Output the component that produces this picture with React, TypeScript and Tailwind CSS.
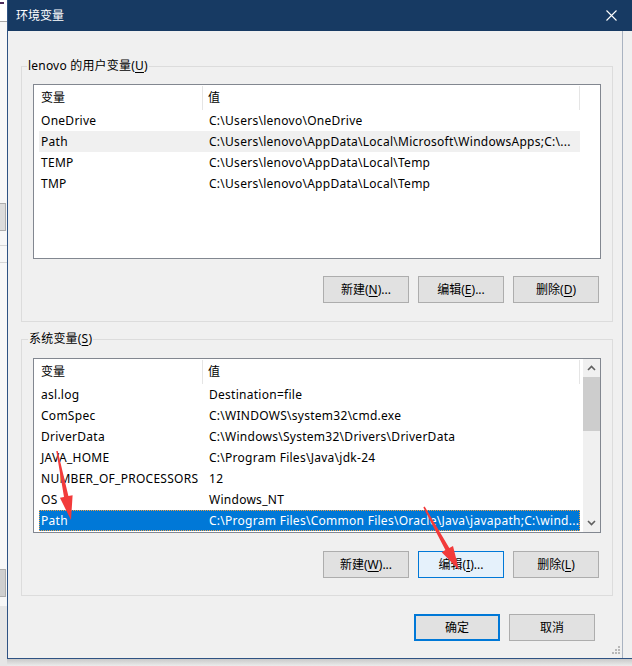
import React from "react";

type Row = [string, string];

const userRows: Row[] = [
  ["OneDrive", "C:\\Users\\lenovo\\OneDrive"],
  ["Path", "C:\\Users\\lenovo\\AppData\\Local\\Microsoft\\WindowsApps;C:\\..."],
  ["TEMP", "C:\\Users\\lenovo\\AppData\\Local\\Temp"],
  ["TMP", "C:\\Users\\lenovo\\AppData\\Local\\Temp"],
];

const sysRows: Row[] = [
  ["asl.log", "Destination=file"],
  ["ComSpec", "C:\\WINDOWS\\system32\\cmd.exe"],
  ["DriverData", "C:\\Windows\\System32\\Drivers\\DriverData"],
  ["JAVA_HOME", "C:\\Program Files\\Java\\jdk-24"],
  ["NUMBER_OF_PROCESSORS", "12"],
  ["OS", "Windows_NT"],
  ["Path", "C:\\Program Files\\Common Files\\Oracle\\Java\\javapath;C:\\wind..."],
];

function arrowPoints(x1: number, y1: number, x2: number, y2: number) {
  const dx = x2 - x1;
  const dy = y2 - y1;
  const L = Math.sqrt(dx * dx + dy * dy);
  const ux = dx / L;
  const uy = dy / L;
  const nx = -uy;
  const ny = ux;
  const headLen = 24;
  const headW = 13;
  const shaftW = 4.5;
  const tailW = 1.5;
  const bx = x2 - ux * headLen;
  const by = y2 - uy * headLen;
  const pts = [
    [x1 + (nx * tailW) / 2, y1 + (ny * tailW) / 2],
    [bx + (nx * shaftW) / 2, by + (ny * shaftW) / 2],
    [bx + (nx * headW) / 2, by + (ny * headW) / 2],
    [x2, y2],
    [bx - (nx * headW) / 2, by - (ny * headW) / 2],
    [bx - (nx * shaftW) / 2, by - (ny * shaftW) / 2],
    [x1 - (nx * tailW) / 2, y1 - (ny * tailW) / 2],
  ];
  return pts.map((p) => p.map((v) => v.toFixed(1)).join(",")).join(" ");
}

function Btn({
  pre,
  mk,
  post,
  variant = "normal",
}: {
  pre: string;
  mk?: string;
  post?: string;
  variant?: "normal" | "hover" | "default";
}) {
  const cls =
    variant === "hover"
      ? "border border-[#0078d7] bg-[#e5f1fb]"
      : variant === "default"
      ? "border-2 border-[#0078d7] bg-[#e1e1e1]"
      : "border border-[#adadad] bg-[#e1e1e1]";
  return (
    <div className={`w-[86px] h-[27px] flex items-center justify-center text-black ${cls}`}>
      <span className="leading-none whitespace-nowrap">
        {pre}
        {mk ? (
          <>
            (<span className="underline underline-offset-[2px]">{mk}</span>)
          </>
        ) : null}
        {post}
      </span>
    </div>
  );
}

function Chevron({ up }: { up: boolean }) {
  return (
    <svg width="9" height="6" viewBox="0 0 9 6">
      <path
        d={up ? "M1 5 L4.5 1.5 L8 5" : "M1 1 L4.5 4.5 L8 1"}
        fill="none"
        stroke="#606060"
        strokeWidth="1.6"
      />
    </svg>
  );
}

function ListBox({
  rows,
  selected,
  soft,
  scrollbar,
}: {
  rows: Row[];
  selected?: number;
  soft?: number;
  scrollbar?: boolean;
}) {
  return (
    <div className="h-[175px] border border-[#828790] bg-white flex overflow-hidden">
      <div className="flex flex-col pl-[5px]">
        <div className="h-[25px] flex shrink-0">
          <div className="w-[164px] pl-[2px] flex items-center border-r border-[#e5e5e5] mt-[1px]">
            变量
          </div>
          <div className="w-[377px] pl-[5px] flex items-center border-r border-[#e5e5e5] mt-[1px]">
            值
          </div>
        </div>
        {rows.map((r, i) => {
          const sel = i === selected;
          const sf = i === soft;
          return (
            <div
              key={r[0]}
              className={`h-[21px] w-[541px] flex shrink-0 tracking-[0.27px] ${
                sel
                  ? "bg-[#0078d7] text-white outline-1 outline-dotted outline-[#f5a040] -outline-offset-1"
                  : sf
                  ? "bg-[#f0f0f0]"
                  : ""
              }`}
            >
              <div className="w-[164px] pl-[2px] flex items-center overflow-hidden whitespace-nowrap">
                {r[0]}
              </div>
              <div className="w-[377px] pl-[6px] flex items-center overflow-hidden whitespace-nowrap">
                {r[1]}
              </div>
            </div>
          );
        })}
      </div>
      <div className="flex-1" />
      {scrollbar ? (
        <div className="w-[17px] bg-[#f0f0f0] flex flex-col items-center">
          <div className="h-[18px] flex items-center justify-center">
            <Chevron up />
          </div>
          <div className="w-[17px] h-[54px] bg-[#cdcdcd]" />
          <div className="flex-1" />
          <div className="h-[18px] flex items-center justify-center">
            <Chevron up={false} />
          </div>
        </div>
      ) : null}
    </div>
  );
}

export default function App() {
  return (
    <div className="w-[632px] h-[666px] overflow-hidden relative flex bg-[#ededed] text-[12px] text-black font-['Noto_Sans','Noto_Sans_CJK_SC',sans-serif]">
      {/* background window strip on the left */}
      <div className="w-[7px] flex flex-col bg-[#f7f7f7] shrink-0">
        <div className="h-[21px] bg-white relative">
          <div className="mt-[2px] w-[4px] h-[2px] bg-[#4b2b5b]" />
        </div>
        <div className="h-px bg-[#a8a8a8]" />
        <div className="h-[181px]" />
        <div className="h-[28px] w-[6px] bg-[#dcdcdc] border border-[#adadad] border-l-0" />
        <div className="h-[14px]" />
        <div className="h-px bg-[#d6d6d6]" />
        <div className="h-[16px]" />
        <div className="h-px bg-[#d6d6d6]" />
        <div className="h-[306px]" />
        <div className="h-[28px] w-[6px] bg-[#cfcfcf] border border-[#adadad] border-l-0" />
        <div className="h-[9px]" />
        <div className="flex-1 bg-[#e6e6e6]" />
      </div>

      {/* dialog + shadow */}
      <div className="flex-1 flex flex-col">
        <div className="h-[659px] border-l border-b border-[#2e5283] flex flex-col bg-[#f0f0f0]">
          {/* title bar */}
          <div className="h-[31px] bg-[#173a63] flex items-center text-white shrink-0">
            <div className="pl-[8px] flex-1 leading-none">环境变量</div>
            <div className="w-[46px] flex items-center justify-center mr-[-2px]">
              <svg width="11" height="11" viewBox="0 0 11 11">
                <path d="M0.5 0.5 L10.5 10.5 M10.5 0.5 L0.5 10.5" stroke="#ffffff" strokeWidth="1.1" />
              </svg>
            </div>
          </div>

          {/* body */}
          <div className="flex-1 flex">
            <div className="w-[614px] flex flex-col pt-[27px]">
              <fieldset className="ml-[13px] w-[592px] border border-[#dcdcdc] px-[11px] pb-[18px]">
                <legend className="ml-[-6px] px-[1px] leading-[16px] tracking-[0.2px]">
                  lenovo 的用户变量(<span className="underline underline-offset-[2px]">U</span>)
                </legend>
                <div className="mt-[10px]">
                  <ListBox rows={userRows} soft={1} />
                </div>
                <div className="mt-[17px] flex justify-end gap-[9px] mr-[2px]">
                  <Btn pre="新建" mk="N" post="..." />
                  <Btn pre="编辑" mk="E" post="..." />
                  <Btn pre="删除" mk="D" />
                </div>
              </fieldset>

              <fieldset className="mt-[9px] ml-[13px] w-[592px] border border-[#dcdcdc] px-[11px] pb-[17px]">
                <legend className="ml-[-5px] px-[1px] leading-[16px] tracking-[0.2px]">
                  系统变量(<span className="underline underline-offset-[2px]">S</span>)
                </legend>
                <div className="mt-[11px]">
                  <ListBox rows={sysRows} selected={6} scrollbar />
                </div>
                <div className="mt-[18px] flex justify-end gap-[9px] mr-[2px]">
                  <Btn pre="新建" mk="W" post="..." />
                  <Btn pre="编辑" mk="I" post="..." variant="hover" />
                  <Btn pre="删除" mk="L" />
                </div>
              </fieldset>

              <div className="mt-[18px] flex justify-end gap-[9px] pr-[27px]">
                <Btn pre="确定" variant="default" />
                <Btn pre="取消" />
              </div>

              <div className="mt-[5px] flex justify-end pr-[1px]">
                <svg width="9" height="9" viewBox="0 0 9 9">
                  <g fill="#b8b8b8">
                    <rect x="6" y="0" width="2" height="2" />
                    <rect x="3" y="3" width="2" height="2" />
                    <rect x="6" y="3" width="2" height="2" />
                    <rect x="0" y="6" width="2" height="2" />
                    <rect x="3" y="6" width="2" height="2" />
                    <rect x="6" y="6" width="2" height="2" />
                  </g>
                </svg>
              </div>
            </div>
            <div className="w-px bg-[#a9b3c1]" />
            <div className="flex-1 bg-[#f0f0f0]" />
          </div>
        </div>
        <div className="flex-1 bg-gradient-to-b from-[#c9c9c9] to-[#ececec]" />
      </div>

      {/* red annotation arrows */}
      <svg className="absolute left-0 top-0 pointer-events-none" width="632" height="666">
        <polygon points={arrowPoints(57, 451, 71, 520)} fill="#f23b3b" />
        <polygon points={arrowPoints(424, 507, 459, 570)} fill="#f23b3b" />
      </svg>
    </div>
  );
}
